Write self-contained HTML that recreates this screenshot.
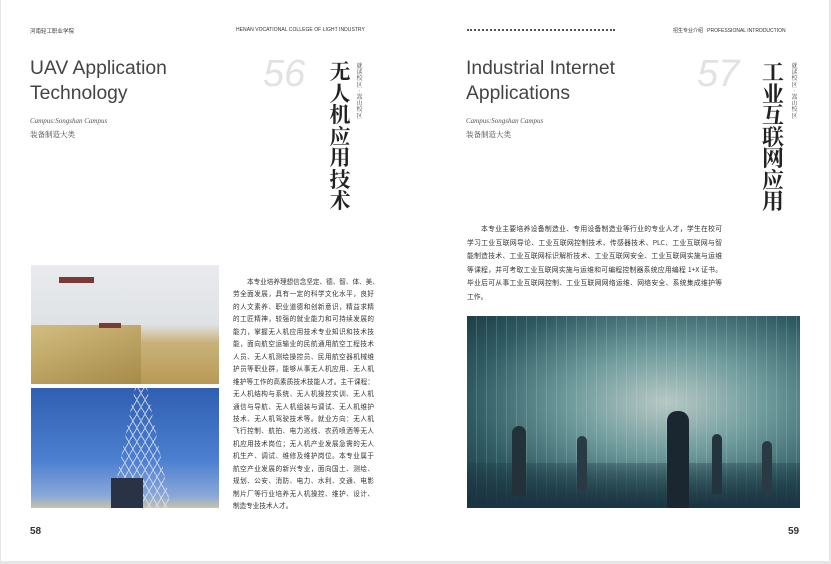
<!DOCTYPE html>
<html><head><meta charset="utf-8"><style>
*{margin:0;padding:0;box-sizing:border-box}
body{width:831px;height:564px;background:#e6e6e6;position:relative;overflow:hidden;font-family:"Liberation Sans","Noto Sans CJK SC",sans-serif;color:#333}
.page{position:absolute;left:1px;top:0;width:828px;height:561px;background:#fff}
.a{position:absolute;white-space:nowrap}
.hd{font-size:5.5px;color:#333;top:27px}
.t{font-size:19.3px;color:#444;line-height:25px;font-weight:300}
.camp{font-family:"Liberation Serif",serif;font-style:italic;font-size:7px;color:#555}
.cat{font-family:"Noto Serif CJK SC",serif;font-size:7.5px;color:#444}
.num{font-size:38px;color:#e2e2e2;font-style:italic;font-weight:300}
.vb{font-family:"Noto Serif CJK SC",serif;font-weight:700;color:#222;font-size:21px;line-height:21.5px;width:22px;text-align:center;white-space:normal}
.vs{font-family:"Noto Serif CJK SC",serif;font-size:6px;line-height:6.2px;width:7px;color:#444;white-space:normal;text-align:center}
.body{font-family:"Noto Sans CJK SC",sans-serif;font-size:6.6px;color:#333}
.body div{white-space:nowrap;text-align:justify;text-align-last:justify;text-justify:inter-character}
.body div.l{text-align-last:left}
</style></head><body><div class="page">
<div class="a hd" style="left:29px">河南轻工职业学院</div>
<div class="a hd" style="left:235px;font-size:5px;letter-spacing:.05px">HENAN VOCATIONAL COLLEGE OF LIGHT INDUSTRY</div>
<div class="a" style="left:466px;top:29px;width:148px;height:2px;border-top:2px dotted #555"></div>
<div class="a hd" style="left:672px;font-size:5px">招生专业介绍&nbsp;&nbsp;&nbsp;PROFESSIONAL INTRODUCTION</div>

<div class="a t" style="left:29px;top:56px">UAV Application<br>Technology</div>
<div class="a camp" style="left:29px;top:117px">Campus:Songshan Campus</div>
<div class="a cat" style="left:29px;top:129px">装备制造大类</div>
<div class="a num" style="left:262px;top:53px">56</div>
<div class="a vb" style="left:328px;top:61px">无人机应用技术</div>
<div class="a vs" style="left:355px;top:63px">就读校区·嵩山校区</div>

<div class="a t" style="left:465px;top:56px">Industrial Internet<br>Applications</div>
<div class="a camp" style="left:465px;top:117px">Campus:Songshan Campus</div>
<div class="a cat" style="left:465px;top:129px">装备制造大类</div>
<div class="a num" style="left:696px;top:53px">57</div>
<div class="a vb" style="left:760px;top:61px;font-size:22px;line-height:21.5px;width:24px">工业互联网应用</div>
<div class="a vs" style="left:790px;top:63px">就读校区·嵩山校区</div>

<div class="a" style="left:30px;top:265px;width:188px;height:119px;background:linear-gradient(180deg,#e9ebee 0%,#dfe2e4 50%,#c9b27a 65%,#b89a55 100%)">
<div style="position:absolute;left:0;top:60px;width:110px;height:59px;background:linear-gradient(160deg,#d2bd80,#a68a48)"></div>
<div style="position:absolute;left:28px;top:12px;width:35px;height:6px;background:#7a3a35"></div>
<div style="position:absolute;left:68px;top:58px;width:22px;height:5px;background:#7a3a35"></div>
</div>
<div class="a" style="left:30px;top:388px;width:188px;height:120px;background:linear-gradient(180deg,#2f5fb0,#4c7fd0 60%,#8aa8d8 90%,#c9c2a8)">
<div style="position:absolute;left:80px;top:0;width:60px;height:120px;background:repeating-linear-gradient(60deg,transparent 0 6px,#dfe4ee 6px 7px),repeating-linear-gradient(-60deg,transparent 0 6px,#dfe4ee 6px 7px);clip-path:polygon(40% 0,60% 0,100% 100%,0 100%);opacity:.8"></div>
<div style="position:absolute;left:80px;top:90px;width:32px;height:30px;background:#2a3346"></div>
</div>

<div class="a body" style="left:232px;top:275px;width:141px;line-height:12.45px">
<div style="padding-left:14px">本专业培养理想信念坚定、德、智、体、美、</div>
<div>劳全面发展，具有一定的科学文化水平，良好</div>
<div>的人文素养、职业道德和创新意识，精益求精</div>
<div>的工匠精神，较强的就业能力和可持续发展的</div>
<div>能力，掌握无人机应用技术专业知识和技术技</div>
<div>能，面向航空运输业的民航通用航空工程技术</div>
<div>人员、无人机测绘操控员、民用航空器机械维</div>
<div>护员等职业群，能够从事无人机应用、无人机</div>
<div>维护等工作的高素质技术技能人才。主干课程：</div>
<div>无人机结构与系统、无人机操控实训、无人机</div>
<div>通信与导航、无人机组装与调试、无人机维护</div>
<div>技术、无人机驾驶技术等。就业方向：无人机</div>
<div>飞行控制、航拍、电力巡线、农药喷洒等无人</div>
<div>机应用技术岗位；无人机产业发展急需的无人</div>
<div>机生产、调试、维修及维护岗位。本专业属于</div>
<div>航空产业发展的新兴专业，面向国土、测绘、</div>
<div>规划、公安、消防、电力、水利、交通、电影</div>
<div>制片厂等行业培养无人机操控、维护、设计、</div>
<div class="l">制造专业技术人才。</div>
</div>

<div class="a body" style="left:466px;top:222px;width:255px;line-height:13.6px;font-size:6.8px">
<div style="padding-left:14px">本专业主要培养设备制造业、专用设备制造业等行业的专业人才，学生在校可</div>
<div>学习工业互联网导论、工业互联网控制技术、传感器技术、PLC、工业互联网与智</div>
<div>能制造技术、工业互联网标识解析技术、工业互联网安全、工业互联网实施与运维</div>
<div>等课程，并可考取工业互联网实施与运维和可编程控制器系统应用编程 1+X 证书。</div>
<div>毕业后可从事工业互联网控制、工业互联网网络运维、网络安全、系统集成维护等</div>
<div class="l">工作。</div>
</div>

<div class="a" style="left:466px;top:316px;width:333px;height:192px;background:radial-gradient(ellipse at 60% 45%,#b8c8c4 0%,#6e9a9c 35%,#2f5a62 70%,#17323a 100%)">
<div style="position:absolute;inset:0;background:repeating-linear-gradient(90deg,transparent 0 9px,rgba(200,240,240,.18) 9px 10px)"></div>
<div style="position:absolute;left:0;bottom:0;width:100%;height:45px;background:linear-gradient(180deg,rgba(30,60,70,.3),#1a3440)"></div>
<div style="position:absolute;left:200px;top:95px;width:22px;height:97px;background:#1a2630;border-radius:10px 10px 0 0"></div>
<div style="position:absolute;left:45px;top:110px;width:14px;height:70px;background:#22313a;border-radius:7px 7px 0 0"></div>
<div style="position:absolute;left:110px;top:120px;width:10px;height:55px;background:#2a3a44;border-radius:5px 5px 0 0"></div>
<div style="position:absolute;left:245px;top:118px;width:10px;height:60px;background:#24343e;border-radius:5px 5px 0 0"></div>
<div style="position:absolute;left:295px;top:125px;width:10px;height:52px;background:#2a3a44;border-radius:5px 5px 0 0"></div>
</div>

<div class="a" style="left:29px;top:526px;font-size:10px;font-weight:bold;color:#333">58</div>
<div class="a" style="left:787px;top:526px;font-size:10px;font-weight:bold;color:#333">59</div>
</div></body></html>
